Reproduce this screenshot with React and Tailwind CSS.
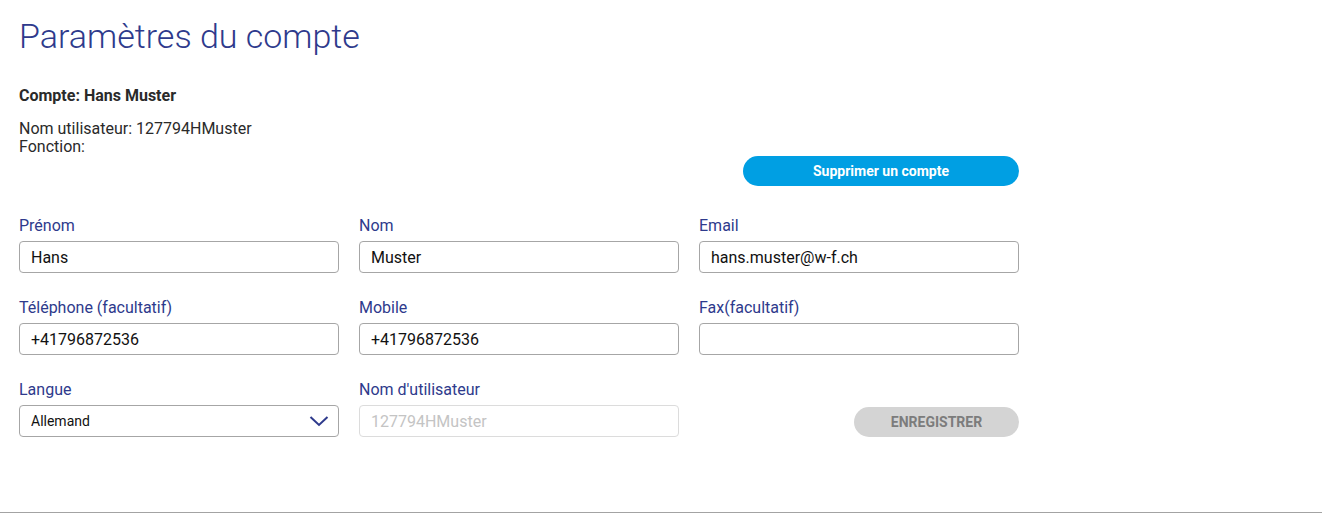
import { useState } from "react";

const Field = ({ label, value, disabled, onChange }) => (
  <div className="flex flex-col">
    <label className="text-[16px] leading-[20px] text-[#2e3a8c] mb-[5px]">{label}</label>
    <input
      value={value}
      disabled={disabled}
      onChange={onChange}
      className={`h-[32px] w-full rounded-[4px] border px-[11px] text-[16px] outline-none ${
        disabled
          ? "border-[#dcdcdc] bg-white text-[#c4c4c4]"
          : "border-[#a6a6a6] text-[#111]"
      }`}
    />
  </div>
);

const App = () => {
  const [form, setForm] = useState({
    prenom: "Hans",
    nom: "Muster",
    email: "hans.muster@w-f.ch",
    tel: "+41796872536",
    mobile: "+41796872536",
    fax: "",
    langue: "Allemand",
  });

  const set = (key) => (e) => setForm({ ...form, [key]: e.target.value });

  return (
    <div className="min-h-[523px] bg-white font-['Roboto',sans-serif] text-[#2a2a2a] flex flex-col">
      <div className="pl-[19px] w-[1019px]">
        {/* Title */}
        <h1 className="mt-[16px] text-[34px] leading-[40px] font-light text-[#2e3a8c]">
          Paramètres du compte
        </h1>

        {/* Account info */}
        <p className="mt-[30px] text-[16px] leading-[20px] font-bold">Compte: Hans Muster</p>
        <div className="mt-[14px] text-[16px] leading-[18px]">
          <p>Nom utilisateur: 127794HMuster</p>
          <p>Fonction:</p>
        </div>

        <div className="flex justify-end">
          <button className="h-[30px] w-[276px] rounded-full bg-[#009fe3] text-[14px] font-bold text-white">
            Supprimer un compte
          </button>
        </div>

        {/* Form */}
        <div className="mt-[30px] grid grid-cols-3 gap-x-[20px] gap-y-[25px]">
          <Field label="Prénom" value={form.prenom} onChange={set("prenom")} />
          <Field label="Nom" value={form.nom} onChange={set("nom")} />
          <Field label="Email" value={form.email} onChange={set("email")} />

          <Field label="Téléphone (facultatif)" value={form.tel} onChange={set("tel")} />
          <Field label="Mobile" value={form.mobile} onChange={set("mobile")} />
          <Field label="Fax(facultatif)" value={form.fax} onChange={set("fax")} />

          <div className="flex flex-col">
            <label className="text-[16px] leading-[20px] text-[#2e3a8c] mb-[5px]">Langue</label>
            <div className="relative">
              <select
                value={form.langue}
                onChange={set("langue")}
                className="h-[32px] w-full appearance-none rounded-[4px] border border-[#a6a6a6] bg-white px-[11px] text-[14px] text-[#111] outline-none"
              >
                <option>Allemand</option>
                <option>Français</option>
                <option>Italien</option>
                <option>Anglais</option>
              </select>
              <svg
                className="pointer-events-none absolute right-[10px] top-[9px]"
                width="20"
                height="14"
                viewBox="0 0 20 14"
                fill="none"
              >
                <path d="M1.5 3 L10 11 L18.5 3" stroke="#2e3a8c" strokeWidth="2" />
              </svg>
            </div>
          </div>
          <Field label="Nom d'utilisateur" value="127794HMuster" disabled />
          <div className="flex items-end justify-end">
            <button className="h-[30px] w-[165px] rounded-full bg-[#d4d4d4] text-[14px] font-bold uppercase text-[#7c7c7c]">
              Enregistrer
            </button>
          </div>
        </div>
      </div>

      <div className="mt-[75px] border-t border-[#a3a3a3]" />
    </div>
  );
};

export default App;
